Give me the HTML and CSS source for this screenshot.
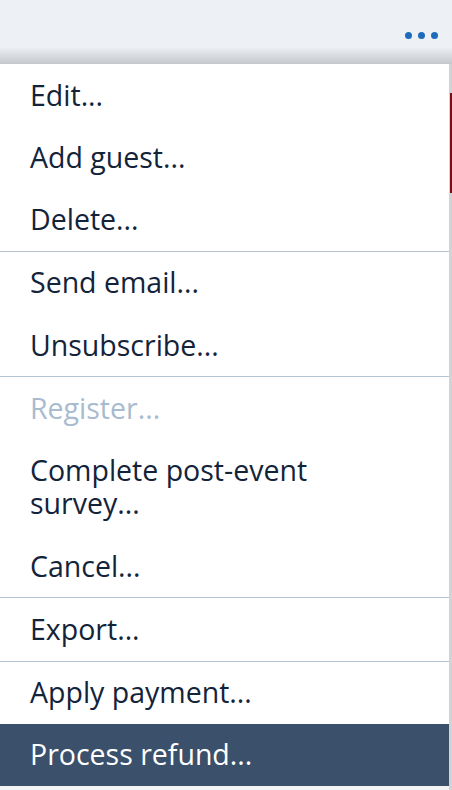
FILE: index.html
```html
<!DOCTYPE html>
<html lang="en">
<head>
  <meta charset="UTF-8" />
  <meta name="viewport" content="width=device-width, initial-scale=1" />
  <title>Registration actions</title>
  <link rel="stylesheet" href="styles.css">
</head>
<body>
  <header class="topbar">
    <button class="more" aria-label="More actions">
      <span class="dot"></span><span class="dot"></span><span class="dot"></span>
    </button>
  </header>

  <div class="backdrop">
    <div class="accent"></div>
  </div>

  <!-- Actions menu, opened from the "more" button -->
  <ul class="menu" role="menu">
    <li class="item">Edit...</li>
    <li class="item">Add guest...</li>
    <li class="item">Delete...</li>
    <li class="divider"></li>
    <li class="item">Send email...</li>
    <li class="item">Unsubscribe...</li>
    <li class="divider"></li>
    <li class="item disabled">Register...</li>
    <li class="item">Complete post-event survey...</li>
    <li class="item">Cancel...</li>
    <li class="divider"></li>
    <li class="item">Export...</li>
    <li class="divider"></li>
    <li class="item">Apply payment...</li>
    <li class="item active">Process refund...</li>
  </ul>
</body>
</html>
```

FILE: styles.css
```css
body {
  margin: 0;
  padding: 0;
  font-family: 'Open Sans', 'Noto Sans', sans-serif;
  background: #f4f4f4;
  height: 100vh;
  overflow: hidden;
  position: relative;
}
.topbar {
  height: 64px;
  background: linear-gradient(180deg, #edf1f6 0, #edf1f6 47px, #c4c8cc 64px);
  display: flex;
  justify-content: flex-end;
  align-items: flex-start;
  padding: 0 14px 0 0;
}
.more {
  margin-top: 32px;
  display: flex;
  gap: 6px;
  padding: 0;
  border: none;
  background: none;
  cursor: pointer;
}
.dot {
  width: 7px;
  height: 7px;
  border-radius: 50%;
  background: #1f6bbb;
}
.backdrop {
  height: 726px;
  display: flex;
  justify-content: flex-end;
  padding-top: 29px;
  box-sizing: border-box;
  background: linear-gradient(90deg, #f4f4f4 449px, #d2d3d4 449px);
}
.accent {
  width: 2px;
  height: 100px;
  background: #7d0e14;
}
.menu {
  position: absolute;
  top: 64px;
  left: 0;
  width: 449px;
  margin: 0;
  padding: 0;
  list-style: none;
  background: #fff;
}
.item {
  padding: 14.6px 40px 14.7px 30px;
  font-size: 28.5px;
  line-height: 33px;
  color: #13233a;
  cursor: pointer;
}
.item.disabled {
  color: #a8bbcf;
  cursor: default;
}
.item.active {
  background: #3a506b;
  color: #fff;
}
.divider {
  height: 1px;
  background: #b4c4d5;
}
```
